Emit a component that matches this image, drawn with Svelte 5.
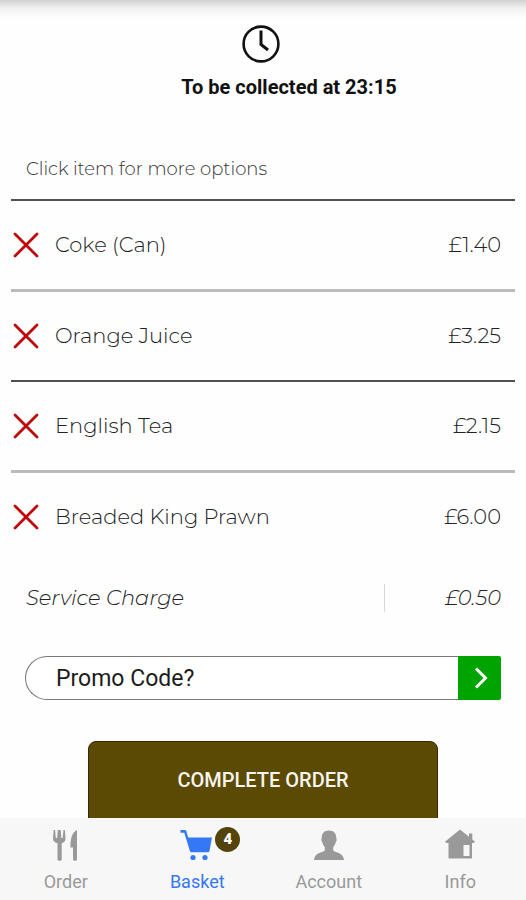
<script lang="ts">
  interface BasketItem {
    name: string;
    price: number;
  }

  let items = $state<BasketItem[]>([
    { name: 'Coke (Can)', price: 1.4 },
    { name: 'Orange Juice', price: 3.25 },
    { name: 'English Tea', price: 2.15 },
    { name: 'Breaded King Prawn', price: 6 }
  ]);

  let promo = $state('');
  let tab = $state('Basket');

  const tabs = ['Order', 'Basket', 'Account', 'Info'];
  const serviceCharge = 0.5;

  const money = (n: number) => '£' + n.toFixed(2);

  function remove(item: BasketItem) {
    items = items.filter((i) => i !== item);
  }
</script>

<div class="screen">
  <main>
    <header class="collect">
      <svg class="clock" viewBox="0 0 38 38" fill="none" stroke="#111" aria-hidden="true">
        <circle cx="19" cy="19" r="17.4" stroke-width="2.6" />
        <path d="M19 5.5V19.5L26 25" stroke-width="3" />
      </svg>
      <h1>To be collected at 23:15</h1>
    </header>

    <p class="hint">Click item for more options</p>

    <ul class="items">
      {#each items as item (item.name)}
        <li>
          <button class="remove" aria-label="Remove {item.name}" onclick={() => remove(item)}>
            <svg viewBox="0 0 26 26" fill="none" stroke="#c00808" stroke-width="2.8" stroke-linecap="round">
              <path d="M2 2L24 24M24 2L2 24" />
            </svg>
          </button>
          <button class="item">
            <span>{item.name}</span>
            <span>{money(item.price)}</span>
          </button>
        </li>
      {/each}
    </ul>

    <div class="service">
      <span>Service Charge</span>
      <span class="amount">{money(serviceCharge)}</span>
    </div>

    <form class="promo" onsubmit={(e) => e.preventDefault()}>
      <input type="text" placeholder="Promo Code?" aria-label="Promo Code" bind:value={promo} />
      <button aria-label="Apply promo code">
        <svg viewBox="0 0 14 22" fill="none" stroke="#fff" stroke-width="3">
          <path d="M2 1.5L11.5 11L2 20.5" />
        </svg>
      </button>
    </form>

    <button class="complete">COMPLETE ORDER</button>
  </main>

  <nav>
    {#each tabs as name}
      <a href="#{name.toLowerCase()}" class:active={tab === name} onclick={() => (tab = name)}>
        <span class="icon">
          {#if name === 'Order'}
            <svg viewBox="0 0 34 32" fill="currentColor">
              <path d="M4.600 1h1.500l.7 8h1.300L8.800 1h2.900l.7 8h1.300l.7-8h1.500l.6 8.500c0 2.600-1.200 4-3.800 4.800v16c0 2-4.200 2-4.200 0v-16C5.600 13.500 4 12.100 4 9.500z" />
              <path d="M28 1v29.300c0 2-4 2-4 0V18.500h-2.500C21.200 10.500 23 3 28 1z" />
            </svg>
          {:else if name === 'Basket'}
            <svg viewBox="0 0 34 32" fill="currentColor">
              <path d="M.5 1h4.300c.8 0 1.300.4 1.500 1.100L8.200 8.500H32l-2.500 13.200c-.2 1-.8 1.500-1.800 1.500H11.800c-1 0-1.700-.5-2-1.500L4.300 3.800H.5z" />
              <circle cx="13" cy="28.500" r="2.600" />
              <circle cx="25" cy="28.500" r="2.600" />
            </svg>
            <span class="badge">{items.length}</span>
          {:else if name === 'Account'}
            <svg viewBox="0 0 34 32" fill="currentColor">
              <path d="M17 1.500c4.600 0 7.300 2.800 7.300 7.200 0 1 .5 1.300.3 2.500-.2 1.100-.8 1.500-1 2.400-.4 1.900-1.200 3.300-2.400 4.400v3.500c2.300 2.300 10.300 2 10.800 9.500H2c.5-7.500 8.500-7.200 10.800-9.500V18c-1.200-1.100-2-2.500-2.400-4.400-.2-.9-.8-1.300-1-2.400-.2-1.200.3-1.500.3-2.500 0-4.400 2.700-7.200 7.300-7.200z" />
            </svg>
          {:else}
            <svg viewBox="0 0 34 32" fill="currentColor" fill-rule="evenodd">
              <path d="M17 .5L26 7.800V4.500h3.300v6L32 12.700l-1.200 1.300H29v14.500c0 .6-.4 1-1 1H6.500c-.6 0-1-.4-1-1V14H3.200L2 12.700zM20.500 16v11h6V16z" />
            </svg>
          {/if}
        </span>
        {name}
      </a>
    {/each}
  </nav>
</div>

<style>
  :global(body) {
    margin: 0;
    background: #fefefe;
  }

  .screen {
    display: flex;
    flex-direction: column;
    height: 100vh;
    font-family: Roboto, sans-serif;
    color: #111;
  }

  button {
    margin: 0;
    padding: 0;
    border: 0;
    background: none;
    font: inherit;
    color: inherit;
    cursor: pointer;
  }

  svg {
    display: block;
  }

  main {
    flex: 1;
    min-height: 0;
    overflow: hidden;
    display: flex;
    flex-direction: column;
    padding: 25px 11px 0;
    background: linear-gradient(#d0d0d0, #f0f0f0 8px, #fefefe 18px);
  }

  .collect {
    display: flex;
    flex-direction: column;
    align-items: center;
    gap: 12px;
  }

  .clock {
    width: 38px;
    height: 38px;
    margin-right: 4px;
  }

  h1 {
    margin: 0;
    padding-left: 52px;
    font-size: 20px;
    line-height: 24px;
    font-weight: 700;
  }

  .hint {
    margin: 58px 15px 18px;
    font-family: Montserrat, Inter, sans-serif;
    font-size: 18px;
    line-height: 24px;
    font-weight: 300;
    color: #333;
  }

  .items {
    margin: 0;
    padding: 0;
    list-style: none;
  }

  .items li {
    display: flex;
    align-items: center;
    gap: 16px;
    border-top: 2px solid #505050;
  }

  .items li:nth-child(even) {
    border-top: 3px solid #bbb;
  }

  .remove svg {
    width: 26px;
    height: 26px;
    margin-left: 2px;
  }

  .item,
  .service {
    font-family: Montserrat, Inter, sans-serif;
    font-size: 21px;
    line-height: 28px;
    font-weight: 300;
    color: #222;
  }

  .item {
    flex: 1;
    display: flex;
    justify-content: space-between;
    padding: 30px 14px 30px 0;
    text-align: left;
  }

  .service {
    display: flex;
    justify-content: space-between;
    margin: 23px 14px 0 15px;
    font-style: italic;
  }

  .amount {
    width: 116px;
    border-left: 1px solid #d8d8d8;
    text-align: right;
  }

  .promo {
    display: flex;
    margin: 44px 14px 41px;
  }

  .promo input {
    flex: 1;
    min-width: 0;
    box-sizing: border-box;
    height: 44px;
    padding: 0 30px;
    border: 1px solid #777;
    border-right: 0;
    border-radius: 22px 0 0 22px;
    background: #fff;
    font: 400 23px Roboto, sans-serif;
    color: #111;
  }

  .promo input::placeholder {
    color: #1c1c1c;
    opacity: 1;
  }

  .promo button {
    display: grid;
    place-items: center;
    width: 43px;
    border-radius: 0 2px 2px 0;
    background: #00a400;
  }

  .promo svg {
    width: 14px;
    height: 22px;
    margin-left: 2px;
  }

  .complete {
    flex-shrink: 0;
    align-self: center;
    width: 350px;
    max-width: 100%;
    height: 78px;
    border: 1px solid #3f2506;
    border-radius: 8px 8px 0 0;
    background: #5b4a03;
    font-size: 20px;
    font-weight: 500;
    color: #f8f4ee;
  }

  nav {
    display: flex;
    background: #f7f7f7;
  }

  nav a {
    flex: 1;
    display: flex;
    flex-direction: column;
    align-items: center;
    gap: 9px;
    padding: 11px 0 6px;
    font-size: 18px;
    line-height: 24px;
    color: #999;
    text-decoration: none;
  }

  nav a.active {
    color: #3478f6;
  }

  .icon {
    position: relative;
  }

  .icon svg {
    width: 34px;
    height: 32px;
  }

  .badge {
    position: absolute;
    top: -2px;
    left: 35px;
    width: 25px;
    height: 25px;
    border-radius: 50%;
    background: #54430a;
    font-size: 15px;
    line-height: 25px;
    font-weight: 900;
    text-align: center;
    color: #fff;
  }
</style>
